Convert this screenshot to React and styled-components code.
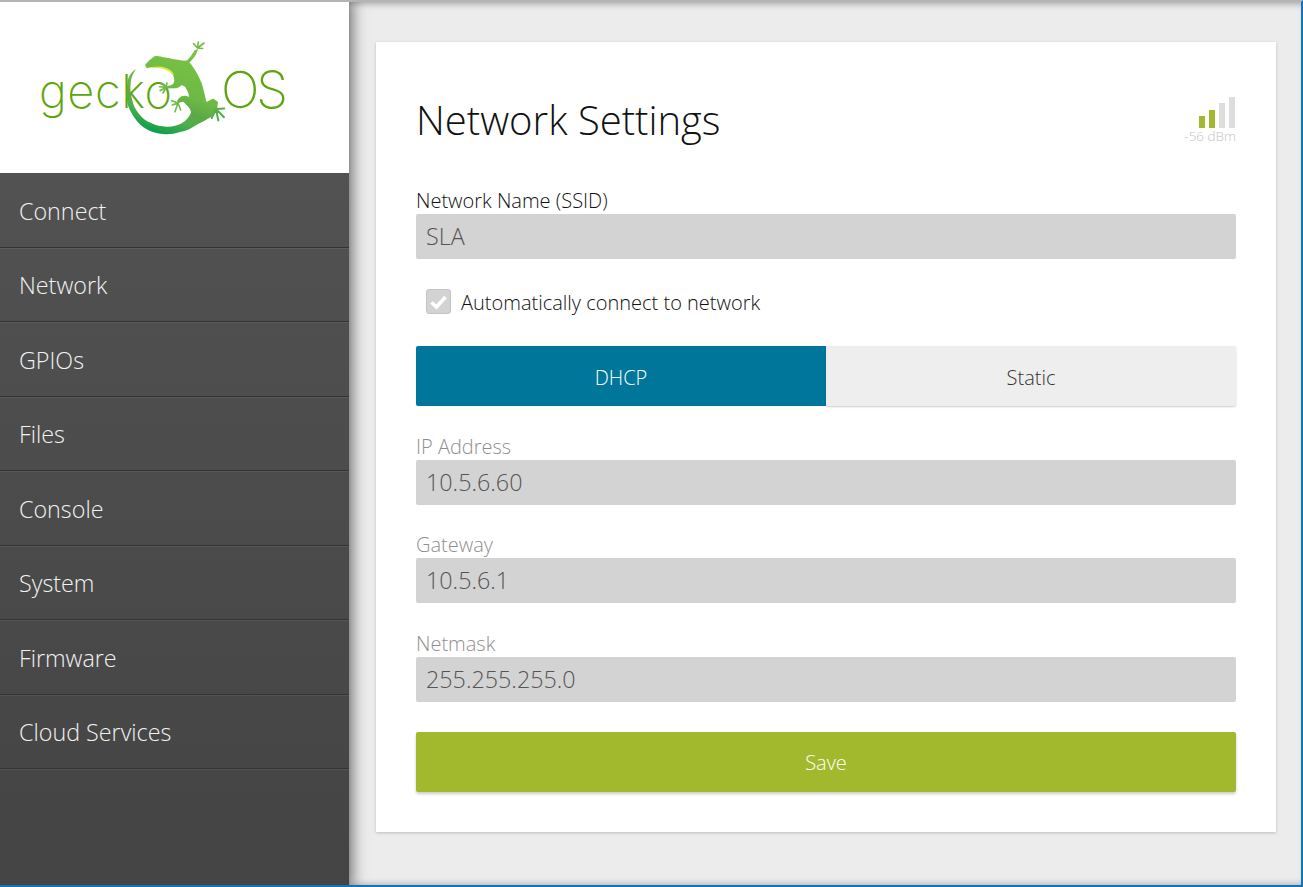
import React from "react";
import styled, { createGlobalStyle } from "styled-components";

const Global = createGlobalStyle`
  html, body { margin: 0; padding: 0; height: 100%; background: #ececec; }
  #root { height: 100%; }
  * { box-sizing: border-box; }
  body { font-family: "Open Sans", "Liberation Sans", sans-serif; font-weight: 300; color: #111; overflow: hidden; }
`;

const Frame = styled.div`
  width: 1303px;
  height: 887px;
  display: flex;
  border-top: 2px solid #b4b4b4;
  border-right: 2px solid #1274b8;
  border-bottom: 2px solid #1274b8;
  background: #ececec;
  overflow: hidden;
`;

const Sidebar = styled.aside`
  width: 349px;
  flex: none;
  display: flex;
  flex-direction: column;
  background: linear-gradient(#555555, #444444);
  position: relative;
  z-index: 1;
  box-shadow: 0 0 14px 3px rgba(0, 0, 0, 0.55);
`;

const LogoArea = styled.div`
  height: 171.4px;
  flex: none;
  background: #fff;
`;

const Logo = styled.svg`
  display: block;
  width: 349px;
  height: 171px;
`;

const NavItem = styled.a`
  height: 74.5px;
  flex: none;
  display: flex;
  align-items: center;
  padding: 1px 0 0 19px;
  font-size: 23.3px;
  font-weight: 300;
  color: #f2f2f2;
  border-bottom: 1px solid #333;
  box-shadow: 0 1px 0 rgba(255, 255, 255, 0.07);
`;

const Main = styled.main`
  flex: 1;
  padding: 40px 25px 0 27px;
  position: relative;
  box-shadow: inset 0 6px 6px -4px rgba(0, 0, 0, 0.3), inset 0 -6px 6px -5px rgba(0, 0, 0, 0.25);
`;

const Card = styled.section`
  width: 900px;
  height: 790px;
  background: #fff;
  padding: 40px 40px 0;
  box-shadow: 0 1px 3px rgba(0, 0, 0, 0.2);
`;

const Header = styled.header`
  display: flex;
  justify-content: space-between;
  height: 106px;
`;

const Title = styled.h1`
  margin: 0;
  font-size: 40px;
  line-height: 76px;
  font-weight: 300;
  color: #111;
`;

const Signal = styled.div`
  display: flex;
  flex-direction: column;
  align-items: flex-end;
  padding-top: 15px;
`;

const Bars = styled.div`
  display: flex;
  align-items: flex-end;
  gap: 4px;
  height: 31px;
  margin-right: 1px;
`;

const Bar = styled.span`
  width: 6px;
  height: ${(p) => p.$h}px;
  background: ${(p) => (p.$on ? "#a2b92d" : "#dddddd")};
`;

const Dbm = styled.div`
  font-size: 13.5px;
  line-height: 16px;
  color: #c4c4c4;
`;

const Field = styled.div``;

const Label = styled.label`
  display: block;
  font-size: 20px;
  line-height: ${(p) => (p.$muted ? 23 : 25)}px;
  height: ${(p) => p.$h || 25}px;
  margin-top: ${(p) => p.$mt || 0}px;
  color: ${(p) => (p.$muted ? "#8f8f8f" : "#111")};
`;

const Input = styled.div`
  height: 45px;
  background: #d3d3d3;
  border-radius: 2px;
  padding: 0 10px 1px;
  display: flex;
  align-items: center;
  font-size: 23.3px;
  font-weight: 300;
  color: #555;
`;

const CheckRow = styled.div`
  display: flex;
  align-items: center;
  gap: 10px;
  height: 25px;
  margin: 30px 0 32px 10px;
`;

const CheckLabel = styled.span`
  font-size: 20px;
  line-height: 27px;
  padding-top: 2px;
  font-weight: 300;
  color: #111;
`;

const CheckBox = styled.span`
  width: 25px;
  height: 25px;
  background: #d3d3d3;
  border: 1px solid #c4c4c4;
  border-radius: 3px;
  display: flex;
  align-items: center;
  justify-content: center;
`;

const Tabs = styled.div`
  display: flex;
  height: 60px;
  margin-bottom: 29px;
`;

const Tab = styled.button`
  flex: 1;
  border: 0;
  padding: 2px 0 0;
  font: inherit;
  font-size: 20px;
  font-weight: 300;
  color: ${(p) => (p.$active ? "#fff" : "#333")};
  background: ${(p) => (p.$active ? "#00769a" : "#eeeeee")};
  border-radius: ${(p) => (p.$active ? "2px 0 0 2px" : "0 2px 2px 0")};
  box-shadow: ${(p) => (p.$active ? "none" : "0 1px 2px rgba(0,0,0,0.2)")};
`;

const Save = styled.button`
  display: block;
  width: 100%;
  height: 60px;
  margin-top: 30px;
  border: 0;
  border-radius: 2px;
  background: #a2b92d;
  color: #fff;
  font: inherit;
  font-size: 20px;
  font-weight: 300;
  box-shadow: 0 2px 3px rgba(0, 0, 0, 0.2);
`;

const LogoText = styled.text`
  font-family: "Inter", "Roboto", sans-serif;
  font-weight: 200;
  font-size: ${(p) => p.$size}px;
  fill: #5ba50d;
`;

const nav = ["Connect", "Network", "GPIOs", "Files", "Console", "System", "Firmware", "Cloud Services"];

const GeckoLogo = () => (
  <Logo viewBox="0 2 349 171" aria-label="gecko OS">
    <defs>
      <linearGradient id="gb" x1="0.75" y1="0.05" x2="0.4" y2="1">
        <stop offset="0" stopColor="#7cc244" />
        <stop offset="0.5" stopColor="#6cb945" />
        <stop offset="0.68" stopColor="#5ba847" />
        <stop offset="0.8" stopColor="#4fb04a" />
        <stop offset="1" stopColor="#0f9f4d" />
      </linearGradient>
    </defs>
    <LogoText $size={47} x="39" y="108" textLength="133" lengthAdjust="spacing">gecko</LogoText>
    <LogoText $size={51} x="221" y="108" textLength="67" lengthAdjust="spacing">OS</LogoText>
    <path
      fill="url(#gb)"
      d="M145 65 C148 61 152 58 155 56 C160 56 167 58 173 59 C178 60 183 61 187 60.5 C190 58 192 54 195 50
         L198 49 C197 54 194 58 189.5 62.5 C193 66 199 76 202 84 C204 91 205 96 206.5 102 L213 98.5 L218 102 L217 110 L211 117
         C206 120 202 122 198 124 C192 128 186 131 180 132 C174 134 168 134.5 163 134 C157 133.5 152 132 148 130
         C142 127 138 123 135 118.5 C131 113 128 107 127 101.5 C126 96 126 91 127 87 C127 82 128 78 130 75 C131 73 133 71 136 69
         C133 73 131 78 130.7 83 C130 88 130.5 93 131.7 98 C133 104 135 109 138.3 113 C142 118 146 121 151.7 123.3
         C156 125.5 161 126.5 166.7 126.7 C172 127 177 125.5 181.7 123.3 C186 121 189 117 191 113 C191 111 190 108.5 188.3 106.7
         C186 104.5 185 103 183 101.7 L178 103 L177 101 C179 97.5 181 96 183.3 96 C185 95.5 187 96 189 97
         C189 93 187 90 185 86.7 L181.7 85 C180 87 178 88 175 88.3 L166 88.5 L165.5 86.5 L171.7 85 C173.5 84 174.3 82 174.3 80
         C174 76 172.5 74 170 71.7 C167.5 69.5 164 68 160 67.3 C155 66.5 151 67 146.7 68.3 Z"
    />
    <path fill="#dcea3c" d="M147 68.3 C155 65.5 165 65.5 171 70.5 C173 72.5 174 74 174 76 C170 70 160 66.6 147 68.3 Z" />
    <g stroke="#6fbc45" strokeWidth="1.6" strokeLinecap="round" fill="none">
      <path d="M197.5 48 L193.5 43.5 M197.5 48 L198.3 42 M197.5 48 L204 43 M197.5 48 L202.7 48.5" />
      <path d="M166 87.5 L159.5 86.7 M166 87.5 L160 90.7 M166 87.5 L163 93 M166 87.5 L161.7 83.5 M166 87.5 L167 83" />
      <path d="M178 103 L171.7 100.7 M178 103 L172.3 105 M178 103 L175 111.7 M178 103 L180.7 110" />
    </g>
    <g stroke="#52b048" strokeWidth="2" strokeLinecap="round" fill="none">
      <path d="M216 109 L211.7 118 M216 109 L218.3 120.5 M216 109 L224 117.3 M216 109 L224.3 108.5" />
    </g>
  </Logo>
);

export default function App() {
  return (
    <Frame>
      <Global />
      <Sidebar>
        <LogoArea>
          <GeckoLogo />
        </LogoArea>
        {nav.map((n) => (
          <NavItem key={n}>{n}</NavItem>
        ))}
      </Sidebar>
      <Main>
        <Card>
          <Header>
            <Title>Network Settings</Title>
            <Signal>
              <Bars>
                <Bar $h={12} $on />
                <Bar $h={18} $on />
                <Bar $h={25} />
                <Bar $h={31} />
              </Bars>
              <Dbm>-56 dBm</Dbm>
            </Signal>
          </Header>
          <Field>
            <Label $h={26}>Network Name (SSID)</Label>
            <Input>SLA</Input>
          </Field>
          <CheckRow>
            <CheckBox>
              <svg width="19" height="16" viewBox="0 0 19 16">
                <path d="M2.5 8.5 L7.5 13 L16.5 3" fill="none" stroke="#fff" strokeWidth="3.6" />
              </svg>
            </CheckBox>
            <CheckLabel>Automatically connect to network</CheckLabel>
          </CheckRow>
          <Tabs>
            <Tab $active>DHCP</Tab>
            <Tab>Static</Tab>
          </Tabs>
          <Field>
            <Label $muted>IP Address</Label>
            <Input>10.5.6.60</Input>
          </Field>
          <Field>
            <Label $muted $mt={28}>Gateway</Label>
            <Input>10.5.6.1</Input>
          </Field>
          <Field>
            <Label $muted $mt={29}>Netmask</Label>
            <Input>255.255.255.0</Input>
          </Field>
          <Save>Save</Save>
        </Card>
      </Main>
    </Frame>
  );
}
